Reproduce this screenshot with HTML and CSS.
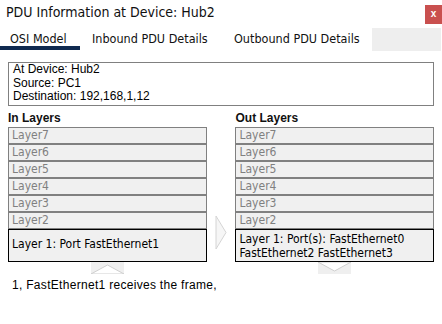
FILE: index.html
```html
<!DOCTYPE html>
<html lang="en">
<head>
    <meta charset="UTF-8">
    <title>PDU Information at Device: Hub2</title>
    <link rel="stylesheet" href="styles.css">
</head>
<body>
    <div class="window">
        <div class="titlebar">
            <span class="title">PDU Information at Device: Hub2</span>
            <span class="close">x</span>
        </div>
        <div class="tabs">
            <span class="tab active">OSI Model</span>
            <span class="tab inbound">Inbound PDU Details</span>
            <span class="tab outbound">Outbound PDU Details</span>
            <span class="tab-fill"></span>
        </div>

        <div class="info">
            <div>At Device: Hub2</div>
            <div>Source: PC1</div>
            <div>Destination: 192,168,1,12</div>
        </div>

        <div class="layers">
            <div class="column">
                <div class="heading">In Layers</div>
                <div class="layer">Layer7</div>
                <div class="layer">Layer6</div>
                <div class="layer">Layer5</div>
                <div class="layer">Layer4</div>
                <div class="layer">Layer3</div>
                <div class="layer">Layer2</div>
                <div class="layer one">Layer 1: Port FastEthernet1</div>
                <svg class="step-arrow" width="33" height="12" viewBox="0 0 33 12">
                    <rect x="0" y="0" width="33" height="12" fill="#efefef"/>
                    <polygon points="0,12 16.5,3 33,12" fill="#fff" stroke="#cfcfcf" stroke-width="1"/>
                </svg>
            </div>

            <div class="middle">
                <svg width="12" height="33" viewBox="0 0 12 33">
                    <polygon points="1,0 11,16.5 1,33 1,0" fill="#f6f6f6" stroke="#d4d4d4" stroke-width="1"/>
                </svg>
            </div>

            <div class="column">
                <div class="heading">Out Layers</div>
                <div class="layer">Layer7</div>
                <div class="layer">Layer6</div>
                <div class="layer">Layer5</div>
                <div class="layer">Layer4</div>
                <div class="layer">Layer3</div>
                <div class="layer">Layer2</div>
                <div class="layer one">Layer 1: Port(s): FastEthernet0<br>FastEthernet2 FastEthernet3</div>
                <svg class="step-arrow" width="33" height="12" viewBox="0 0 33 12">
                    <rect x="0" y="0" width="33" height="12" fill="#efefef"/>
                    <polygon points="0,0 16.5,9 33,0" fill="#fff" stroke="#cfcfcf" stroke-width="1"/>
                </svg>
            </div>
        </div>

        <div class="description">1, FastEthernet1 receives the frame,</div>
    </div>
</body>
</html>
```

FILE: styles.css
```css
body {
    margin: 0;
    background: #fff;
    color: #000;
    font-family: 'DejaVu Sans Condensed', 'DejaVu Sans', sans-serif;
}

.window {
    width: 442px;
    height: 324px;
    overflow: hidden;
}

.titlebar {
    height: 28px;
    display: flex;
    align-items: flex-start;
    justify-content: space-between;
}

.title {
    font-size: 14px;
    padding: 4px 0 0 6px;
    color: #111;
}

.close {
    margin-top: 5px;
    width: 17px;
    height: 19px;
    background: #c9504f;
    color: #fff;
    font-family: 'Liberation Sans', sans-serif;
    font-weight: bold;
    font-size: 10px;
    line-height: 18px;
    text-align: center;
}

.tabs {
    display: flex;
    height: 23px;
    font-size: 12.5px;
}

.tab {
    box-sizing: border-box;
    height: 23px;
    line-height: 21px;
    color: #111;
}

.tab.active {
    width: 80px;
    padding-left: 10px;
    border-bottom: 4px solid #0f2a50;
    height: 22px;
}

.tab.inbound {
    width: 142px;
    padding-left: 12px;
}

.tab.outbound {
    width: 150px;
    padding-left: 12px;
}

.tab-fill {
    width: 69px;
    background: #eeeeee;
}

.info {
    margin: 11px 8px 0 8px;
    border: 1px solid #808080;
    padding: 0 4px 1px 4px;
    font-family: 'Liberation Sans', sans-serif;
    font-size: 12px;
    line-height: 13.5px;
    color: #000;
}

.layers {
    display: flex;
    margin: 6px 8px 0 8px;
}

.column {
    width: 199px;
    display: flex;
    flex-direction: column;
}

.middle {
    width: 29px;
    display: flex;
    align-items: flex-start;
    justify-content: center;
    padding-top: 104px;
}

.heading {
    font-family: 'Liberation Sans', sans-serif;
    font-weight: bold;
    font-size: 12px;
    height: 15px;
    line-height: 12px;
    color: #111;
}

.layer {
    box-sizing: border-box;
    height: 17px;
    border: 1px solid #808080;
    background: #f0f0f0;
    color: #808080;
    font-size: 12px;
    line-height: 15px;
    padding-left: 3px;
}

.layer.one {
    height: 33px;
    border: 1px solid #000;
    color: #000;
    line-height: 14px;
    padding-top: 2px;
}

.column:first-child .layer.one {
    line-height: 29px;
    padding-top: 0;
}

.step-arrow {
    display: block;
    margin-left: 83px;
}

.description {
    margin: 4px 0 0 12px;
    font-family: 'Liberation Sans', sans-serif;
    font-size: 12px;
    letter-spacing: 0.3px;
}
```
